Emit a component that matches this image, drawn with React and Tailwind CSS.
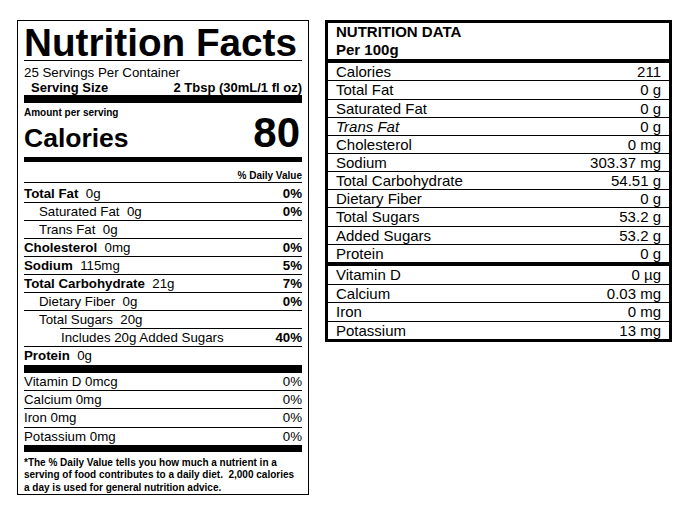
import React from 'react';

const factRows = [
    { label: 'Total Fat', amount: '0g', dv: '0%', bold: true, first: true },
    { label: 'Saturated Fat', amount: '0g', dv: '0%', indent: true },
    { label: 'Trans Fat', amount: '0g', indent: true },
    { label: 'Cholesterol', amount: '0mg', dv: '0%', bold: true },
    { label: 'Sodium', amount: '115mg', dv: '5%', bold: true },
    { label: 'Total Carbohydrate', amount: '21g', dv: '7%', bold: true },
    { label: 'Dietary Fiber', amount: '0g', dv: '0%', indent: true },
    { label: 'Total Sugars', amount: '20g', indent: true, noLine: true },
];

const vitamins = [
    ['Vitamin D 0mcg', '0%'],
    ['Calcium 0mg', '0%'],
    ['Iron 0mg', '0%'],
    ['Potassium 0mg', '0%'],
];

const per100 = [
    ['Calories', '211'],
    ['Total Fat', '0 g'],
    ['Saturated Fat', '0 g'],
    ['Trans Fat', '0 g', true],
    ['Cholesterol', '0 mg'],
    ['Sodium', '303.37 mg'],
    ['Total Carbohydrate', '54.51 g'],
    ['Dietary Fiber', '0 g'],
    ['Total Sugars', '53.2 g'],
    ['Added Sugars', '53.2 g'],
];

const minerals = [
    ['Vitamin D', '0 µg'],
    ['Calcium', '0.03 mg'],
    ['Iron', '0 mg'],
    ['Potassium', '13 mg'],
];

const FactsLabel = () => (
    <div className="w-[292px] border border-black px-[6px] pt-[5px]">
        <h1 className="text-[38.7px] font-bold leading-[34px] border-b border-black">Nutrition Facts</h1>
        <div className="mt-[4px] text-[13.3px] leading-[15px]">25 Servings Per Container</div>
        <div className="flex justify-between pl-[7px] text-[13px] font-bold leading-[15px]">
            <span>Serving Size</span>
            <span>2 Tbsp (30mL/1 fl oz)</span>
        </div>
        <div className="h-[8px] bg-black" />
        <div className="mt-[4px] flex items-end justify-between">
            <div>
                <div className="text-[10px] font-bold leading-[12px]">Amount per serving</div>
                <div className="mt-[6px] text-[26.5px] font-bold leading-[26px]">Calories</div>
            </div>
            <div className="pr-[2px] text-[42px] font-bold leading-[36px]">80</div>
        </div>
        <div className="mt-[6px] h-[5px] bg-black" />
        <div className="mt-[8px] border-b border-black text-right text-[10px] font-bold leading-[12px]">% Daily Value</div>

        {factRows.map((row) => (
            <div
                key={row.label}
                className={`flex justify-between text-[13.3px] leading-[17px] ${row.first ? 'pt-[2px]' : ''} ${row.noLine ? '' : 'border-b border-black'} ${row.indent ? 'pl-[15px]' : ''}`}
            >
                <span>
                    {row.bold ? <b>{row.label}</b> : row.label}
                    {'\u00a0 '}{row.amount}
                </span>
                {row.dv && <b>{row.dv}</b>}
            </div>
        ))}
        <div className="ml-[36px] flex justify-between border-t border-black text-[13.3px] leading-[17px]">
            <span className="pl-[1px]">Includes 20g Added Sugars</span>
            <b>40%</b>
        </div>
        <div className="border-t border-black text-[13.3px] leading-[18px]">
            <b>Protein</b>{'\u00a0 '}0g
        </div>
        <div className="h-[8px] bg-black" />

        {vitamins.map(([label, dv], i) => (
            <div
                key={label}
                className={`flex justify-between text-[13.3px] leading-[17.2px] ${i < vitamins.length - 1 ? 'border-b border-black' : ''}`}
            >
                <span>{label}</span>
                <span>{dv}</span>
            </div>
        ))}
        <div className="h-[7px] bg-black" />
        <p className="mt-[5px] text-[10px] font-bold leading-[12.5px]">
            *The % Daily Value tells you how much a nutrient in a<br />
            serving of food contributes to a daily diet.&nbsp; 2,000 calories<br />
            a day is used for general nutrition advice.
        </p>
    </div>
);

const DataTable = () => (
    <div className="w-[347px] border-[3px] border-black">
        <div className="border-b-[4px] border-black px-[8px] pb-[1px] text-[15px] font-bold leading-[17.6px]">
            NUTRITION DATA<br />
            Per 100g
        </div>
        {per100.map(([label, value, italic]) => (
            <div key={label} className="flex justify-between border-b border-black px-[8px] text-[15px] leading-[17.15px]">
                <span className={italic ? 'italic' : ''}>{label}</span>
                <span>{value}</span>
            </div>
        ))}
        <div className="flex justify-between border-b-[4px] border-black px-[8px] text-[15px] leading-[17.15px]">
            <span>Protein</span>
            <span>0 g</span>
        </div>
        {minerals.map(([label, value], i) => (
            <div
                key={label}
                className={`flex justify-between px-[8px] text-[15px] leading-[17.6px] ${i < minerals.length - 1 ? 'border-b border-black' : ''}`}
            >
                <span>{label}</span>
                <span>{value}</span>
            </div>
        ))}
    </div>
);

export default function App() {
    return (
        <div className="flex min-h-screen items-start gap-[16px] bg-white pl-[17px] pt-[20px] font-['Liberation_Sans',Arial,sans-serif] text-black">
            <FactsLabel />
            <DataTable />
        </div>
    );
}
